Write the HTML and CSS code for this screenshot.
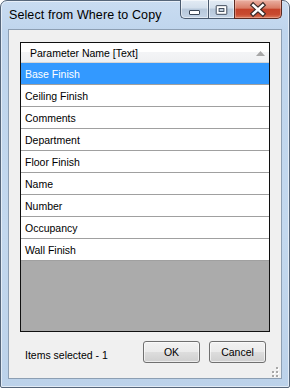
FILE: index.html
```html
<!DOCTYPE html>
<html>
<head>
<meta charset="utf-8">
<link rel="stylesheet" href="styles.css">
</head>
<body>
<div class="window">
  <div class="titlebar">
    <span class="title">Select from Where to Copy</span>
    <div class="caption">
      <div class="cbtn min">
        <svg width="28" height="19" viewBox="0 0 28 19"><rect x="9.5" y="10.5" width="10" height="4" fill="#fff" stroke="#3a4656" rx="0.5"/></svg>
      </div>
      <div class="cbtn max">
        <svg width="26" height="19" viewBox="0 0 26 19"><rect x="7.5" y="5.5" width="11" height="9" fill="#fff" stroke="#3a4656" rx="0.5"/><rect x="10.5" y="8.5" width="5" height="3" fill="#c9d6e4" stroke="#3a4656"/></svg>
      </div>
      <div class="cbtn close">
        <svg width="48" height="19" viewBox="0 0 48 19"><path d="M19 5 L29 14 M29 5 L19 14" stroke="#3b2a28" stroke-width="5" stroke-linecap="square"/><path d="M19 5 L29 14 M29 5 L19 14" stroke="#fff" stroke-width="2.6" stroke-linecap="square"/></svg>
      </div>
    </div>
  </div>
  <div class="client">
    <div class="list">
      <div class="header">
        <span class="header-text">Parameter Name [Text]</span>
        <svg class="sort" width="9" height="5" viewBox="0 0 9 5"><path d="M4.5 0 L9 5 L0 5 Z" fill="#a7a7a7"/></svg>
      </div>
      <div class="row selected">Base Finish</div>
      <div class="row">Ceiling Finish</div>
      <div class="row">Comments</div>
      <div class="row">Department</div>
      <div class="row">Floor Finish</div>
      <div class="row">Name</div>
      <div class="row">Number</div>
      <div class="row">Occupancy</div>
      <div class="row">Wall Finish</div>
      <div class="empty"></div>
    </div>
    <div class="footer">
      <span class="status">Items selected - 1</span>
      <div class="buttons">
        <button class="btn">OK</button>
        <button class="btn">Cancel</button>
      </div>
    </div>
    <div class="grip">
      <svg width="10" height="10" viewBox="0 0 10 10">
        <rect x="7" y="1" width="2" height="2" fill="#fff"/><rect x="6" y="0" width="2" height="2" fill="#a8a8a8"/>
        <rect x="7" y="5" width="2" height="2" fill="#fff"/><rect x="6" y="4" width="2" height="2" fill="#a8a8a8"/>
        <rect x="3" y="5" width="2" height="2" fill="#fff"/><rect x="2" y="4" width="2" height="2" fill="#a8a8a8"/>
        <rect x="7" y="9" width="2" height="1" fill="#fff"/><rect x="6" y="8" width="2" height="2" fill="#a8a8a8"/>
        <rect x="3" y="9" width="2" height="1" fill="#fff"/><rect x="2" y="8" width="2" height="2" fill="#a8a8a8"/>
      </svg>
    </div>
  </div>
</div>
</body>
</html>
```
FILE: styles.css
```css
html, body {
  margin: 0;
  padding: 0;
  background: #ffffff;
}

.window {
  width: 290px;
  height: 388px;
  box-sizing: border-box;
  border: 1px solid #56667a;
  border-radius: 7px 7px 2px 2px;
  background: linear-gradient(180deg, #c9dcf1 0%, #bfd5ed 8%, #c3d8ee 60%, #bcd2ea 100%);
  box-shadow: inset 0 0 0 1px rgba(255, 255, 255, 0.55);
  padding: 0 7px 8px 7px;
  display: flex;
  flex-direction: column;
  font-family: "Liberation Sans", Arial, sans-serif;
}

.titlebar {
  height: 28px;
  display: flex;
  align-items: flex-start;
  flex: none;
}

.title {
  font-family: "Liberation Sans", Arial, sans-serif;
  font-size: 12.5px;
  line-height: 14px;
  color: #000;
  padding-top: 7px;
  padding-left: 1px;
  letter-spacing: 0.1px;
}

.caption {
  margin-left: auto;
  margin-top: -1px;
  display: flex;
  height: 19px;
}

.cbtn {
  box-sizing: border-box;
  height: 19px;
  border: 1px solid #4a5a6e;
  border-top: none;
  display: flex;
}

.cbtn svg {
  display: block;
}

.min {
  width: 28px;
  border-radius: 0 0 0 5px;
  border-right: none;
  background: linear-gradient(180deg, #e3ebf4 0%, #d3dfec 45%, #b6c7da 50%, #c4d4e6 100%);
  box-shadow: inset 0 0 0 1px rgba(255, 255, 255, 0.5);
}

.min svg { margin-left: -1px; }

.max {
  width: 26px;
  border-right: none;
  background: linear-gradient(180deg, #e3ebf4 0%, #d3dfec 45%, #b6c7da 50%, #c4d4e6 100%);
  box-shadow: inset 0 0 0 1px rgba(255, 255, 255, 0.5);
}

.close {
  width: 48px;
  border-radius: 0 0 5px 0;
  border-color: #5b2a22;
  background: linear-gradient(180deg, #eab1a3 0%, #d97c66 45%, #c5432a 52%, #c84a30 80%, #dc7a5c 100%);
  box-shadow: inset 0 0 0 1px rgba(255, 220, 210, 0.35);
}

.client {
  flex: 1;
  position: relative;
  box-sizing: border-box;
  border: 1px solid #8d9fb3;
  background: #f0f0f0;
  padding: 12px 11px 0 11px;
  display: flex;
  flex-direction: column;
}

.list {
  flex: 1;
  display: flex;
  flex-direction: column;
  border: 1px solid #101010;
  background: #ababab;
  font-size: 10.5px;
  color: #000;
}

.header {
  height: 20px;
  box-sizing: border-box;
  border-bottom: 1px solid #d5d5d5;
  background: linear-gradient(180deg, #ffffff 0%, #ffffff 45%, #f3f4f6 50%, #eff0f2 100%);
  display: flex;
  align-items: center;
  padding: 0 4px 0 9px;
}

.header-text {
  flex: 1;
  line-height: 12px;
  padding-top: 1px;
}

.sort {
  display: block;
  margin-top: 1px;
}

.row {
  height: 22px;
  box-sizing: border-box;
  padding: 1px 0 0 4px;
  line-height: 20px;
  background: #ffffff;
  border-bottom: 1px solid #a0a0a0;
  white-space: nowrap;
}

.row.selected {
  background: #3399ff;
  color: #ffffff;
}

.empty {
  flex: 1;
  background: #ababab;
}

.footer {
  height: 46px;
  flex: none;
  box-sizing: border-box;
  display: flex;
  align-items: flex-start;
  padding: 9px 4px 0 5px;
}

.status {
  font-size: 10.5px;
  line-height: 12px;
  padding-top: 8px;
  color: #000;
}

.buttons {
  margin-left: auto;
  display: flex;
  gap: 9px;
}

.btn {
  width: 57px;
  height: 22px;
  box-sizing: border-box;
  margin: 0;
  padding: 0;
  border: 1px solid #707070;
  border-radius: 3px;
  background: linear-gradient(180deg, #f2f2f2 0%, #ebebeb 48%, #dddddd 52%, #cfcfcf 100%);
  box-shadow: inset 0 0 0 1px rgba(255, 255, 255, 0.6);
  font-family: "Liberation Sans", Arial, sans-serif;
  font-size: 10.5px;
  color: #000;
  line-height: 12px;
}

.grip {
  position: absolute;
  right: 1px;
  bottom: 1px;
  width: 10px;
  height: 10px;
}

.grip svg {
  display: block;
}
```
